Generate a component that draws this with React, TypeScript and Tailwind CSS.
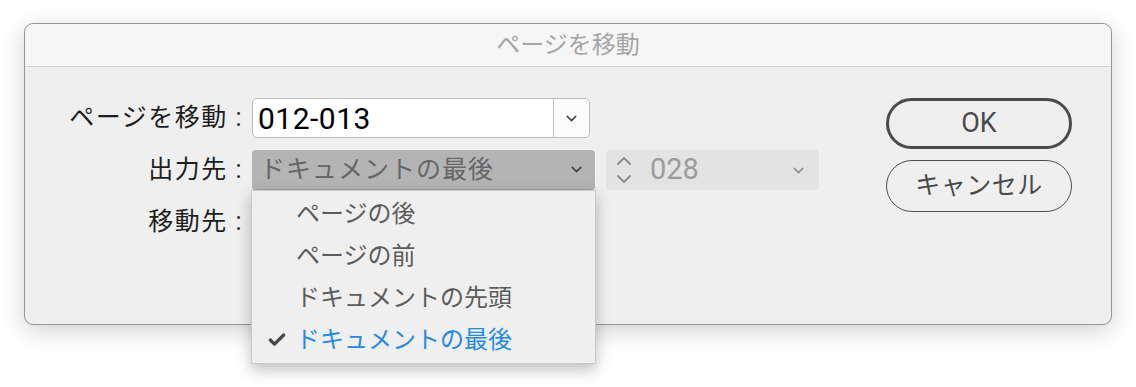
import { Check, ChevronDown } from "lucide-react";

const font = "font-['Helvetica_Neue','Roboto','Noto_Sans_CJK_JP',sans-serif]";

function Stepper() {
  return (
    <svg width="16" height="30" viewBox="0 0 16 30" fill="none" stroke="#8a8a8a" strokeWidth="1.8" strokeLinecap="round" strokeLinejoin="round">
      <path d="M2 9 L8 3 L14 9" />
      <path d="M2 21 L8 27 L14 21" />
    </svg>
  );
}

export default function App() {
  const items = ["ページの後", "ページの前", "ドキュメントの先頭", "ドキュメントの最後"];

  return (
    <div className={`w-[1136px] h-[387px] bg-white pl-[24px] pt-[23px] ${font}`}>
      <div className="w-[1088px] h-[302px] rounded-[9px] border border-[#969696] bg-[#efefef] shadow-[0_6px_24px_rgba(0,0,0,0.18)] flex flex-col">
        {/* title bar */}
        <div className="h-[43px] shrink-0 rounded-t-[9px] bg-[#f6f6f6] border-b border-[#d2d2d2] flex items-center justify-center text-[24px] text-[#a6a6a6]">
          ページを移動
        </div>

        <div className="flex pt-[31px]">
          {/* form */}
          <div className="grid grid-cols-[218px_auto] gap-x-[9px] gap-y-[12px] items-center">
            <div className="text-right text-[25px] tracking-[1.5px] text-[#1e1e1e]">ページを移動 :</div>
            <div className="flex h-[40px] w-[338px] rounded-[5px] border-[1.5px] border-[#bcbcbc] bg-white">
              <div className="flex-1 flex items-center pl-[5px] text-[30px] tracking-[0.5px] text-black">012-013</div>
              <div className="w-[36px] border-l-[1.5px] border-[#c4c4c4] flex items-center justify-center bg-[#fbfbfb] rounded-r-[5px]">
                <ChevronDown className="w-[17px] h-[17px] text-[#444]" strokeWidth={2} />
              </div>
            </div>

            <div className="text-right text-[25px] tracking-[1.5px] text-[#1e1e1e]">出力先 :</div>
            <div className="flex gap-[11px]">
              <div className="relative">
                <div className="flex items-center h-[40px] w-[343px] rounded-[4px] bg-[#b4b4b4] border-b border-[#a3a3a3] pl-[8px] pr-[10px] text-[25px] tracking-[1px] text-[#666]">
                  <span className="flex-1">ドキュメントの最後</span>
                  <ChevronDown className="w-[17px] h-[17px] text-[#3e3e3e]" strokeWidth={2} />
                </div>
                {/* open menu */}
                <div className="absolute left-[-1px] top-[40px] w-[345px] z-10 bg-[#efefef] border border-[#c9c9c9] shadow-[0_6px_14px_rgba(0,0,0,0.25)] py-[2px]">
                  {items.map((it, i) => (
                    <div key={it} className="h-[42px] flex items-center text-[24px]">
                      <div className="w-[44px] flex justify-center pl-[6px]">
                        {i === 3 && <Check className="w-[20px] h-[20px] text-[#474747]" strokeWidth={4} />}
                      </div>
                      <span className={i === 3 ? "text-[#238ae6]" : "text-[#5c5c5c]"}>{it}</span>
                    </div>
                  ))}
                </div>
              </div>
              <div className="flex items-center h-[40px] w-[213px] rounded-[4px] bg-[#e3e3e3] pl-[10px] pr-[12px]">
                <Stepper />
                <span className="flex-1 pl-[18px] text-[29px] text-[#9c9c9c]">028</span>
                <ChevronDown className="w-[17px] h-[17px] text-[#8a8a8a]" strokeWidth={2} />
              </div>
            </div>

            <div className="text-right text-[25px] tracking-[1.5px] text-[#1e1e1e] h-[40px] flex items-center justify-end">移動先 :</div>
            <div className="h-[40px]" />
          </div>

          {/* buttons */}
          <div className="ml-auto mr-[39px] flex flex-col gap-[11px]">
            <button className="w-[186px] h-[51px] rounded-full border-[3px] border-[#4b4b4b] bg-[#efefef] text-[27px] text-[#4a4a4a]">
              OK
            </button>
            <button className="w-[186px] h-[52px] rounded-full border-[1.5px] border-[#4f4f4f] bg-[#efefef] text-[25px] tracking-[0.5px] text-[#4a4a4a]">
              キャンセル
            </button>
          </div>
        </div>
      </div>
    </div>
  );
}
